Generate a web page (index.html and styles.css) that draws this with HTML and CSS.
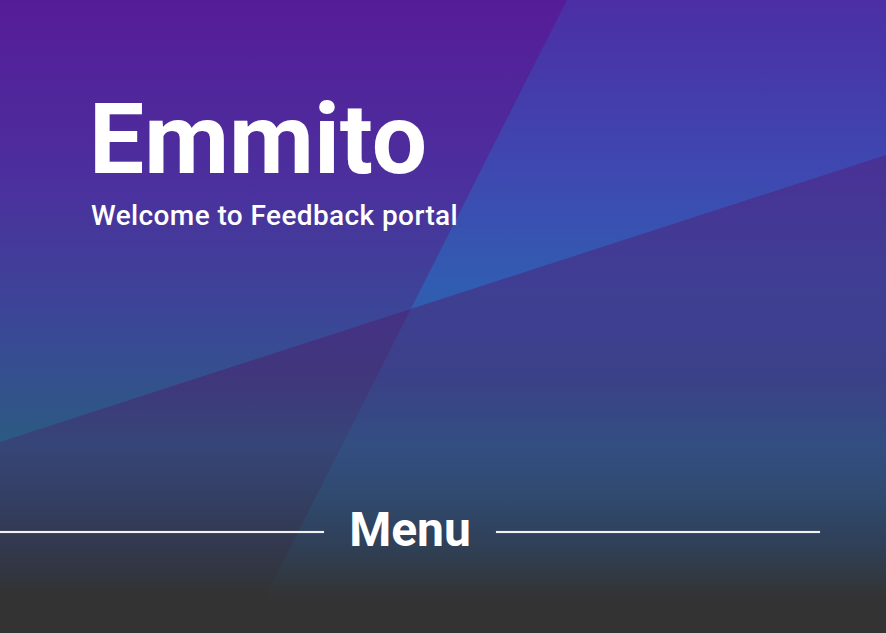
FILE: index.html
```html
<!DOCTYPE html>
<html lang="en">
<head>
<meta charset="utf-8">
<title>Emmito</title>
<link rel="stylesheet" href="styles.css">
</head>
<body>
<div class="page">
  <div class="shade shade-steep"></div>
  <div class="shade shade-flat"></div>
  <header class="hero">
    <h1 class="brand">Emmito</h1>
    <p class="tagline">Welcome to Feedback portal</p>
  </header>
  <section class="menu">
    <div class="menu-head">
      <span class="rule"></span>
      <h2 class="menu-title">Menu</h2>
      <span class="rule"></span>
    </div>
  </section>
</div>
</body>
</html>
```
FILE: styles.css
```css
html, body {
  margin: 0;
  padding: 0;
  height: 100%;
}
body {
  font-family: Roboto, "Liberation Sans", Arial, sans-serif;
  color: #fff;
  background: #333333;
  overflow: hidden;
}
.page {
  position: relative;
  min-height: 633px;
  background: linear-gradient(180deg,
    #561c98 0%,
    #4c2f9e 28%,
    #3a4896 52%,
    #2c5a82 70%,
    #303f55 84%,
    #333333 94%,
    #333333 100%);
  overflow: hidden;
}
.shade {
  position: absolute;
  inset: 0;
  pointer-events: none;
}
.shade-steep {
  clip-path: polygon(567px 0, 886px 0, 886px 633px, 247px 633px);
  background: linear-gradient(180deg,
    rgba(40, 110, 210, 0.22) 0%,
    rgba(20, 150, 230, 0.32) 45%,
    rgba(20, 150, 180, 0.18) 78%,
    rgba(20, 120, 160, 0) 95%);
}
.shade-flat {
  clip-path: polygon(0 442px, 886px 155px, 886px 633px, 0 633px);
  background: linear-gradient(180deg,
    rgba(90, 20, 120, 0.40) 0%,
    rgba(80, 20, 100, 0.42) 60%,
    rgba(60, 30, 80, 0.15) 85%,
    rgba(51, 51, 51, 0) 95%);
}
.hero {
  position: relative;
  padding: 91px 0 0 89px;
}
.brand {
  margin: 0;
  font-size: 98px;
  line-height: 1;
  font-weight: 700;
}
.tagline {
  margin: 11px 0 0 2px;
  font-size: 28px;
  line-height: 31px;
  font-weight: 500;
  letter-spacing: 0.4px;
}
.menu {
  position: relative;
  margin-top: 275px;
  width: 820px;
}
.menu-head {
  display: flex;
  align-items: center;
  gap: 25px;
}
.rule {
  flex: 1;
  height: 2px;
  margin-top: 4px;
  background: #f2f2f2;
  box-shadow: 0 0 1px rgba(255,255,255,0.6);
}
.menu-title {
  margin: 0;
  font-size: 48px;
  line-height: 48px;
  font-weight: 700;
}
```
